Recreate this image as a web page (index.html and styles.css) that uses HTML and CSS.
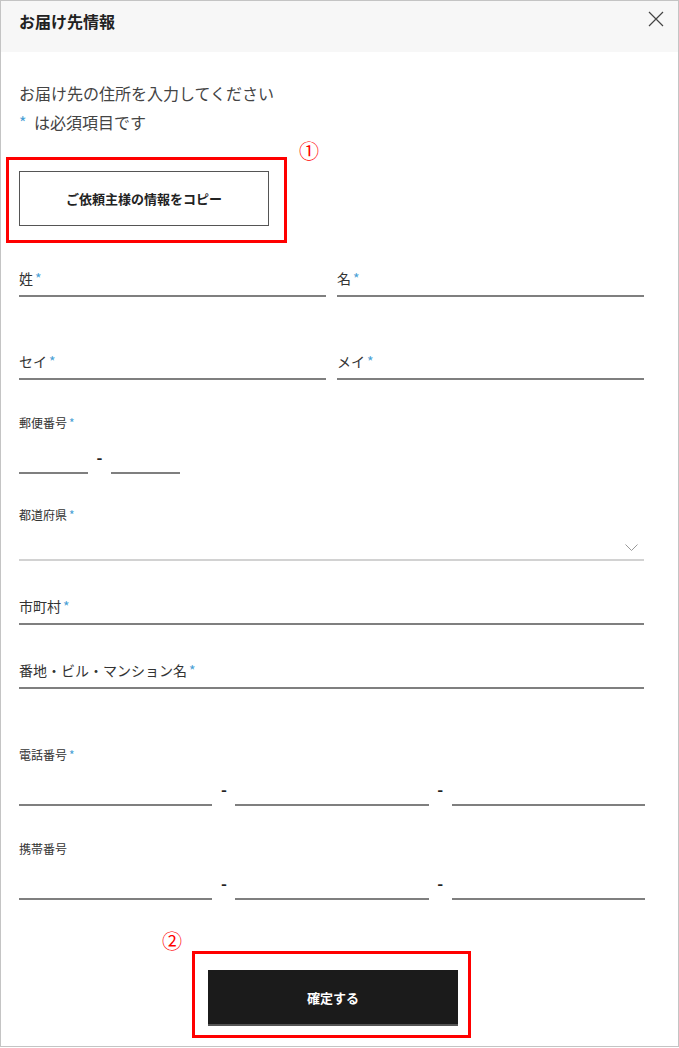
FILE: index.html
```html
<!DOCTYPE html>
<html lang="ja">
<head>
<meta charset="utf-8">
<title>お届け先情報</title>
<link rel="stylesheet" href="styles.css">
</head>
<body>
<div class="modal">
  <div class="modal-header">
    <h1 class="modal-title">お届け先情報</h1>
    <button class="close-btn" aria-label="閉じる">
      <svg width="16" height="16" viewBox="0 0 16 16"><path d="M1 1 L15 15 M15 1 L1 15" stroke="#444" stroke-width="1.2" fill="none"/></svg>
    </button>
  </div>
  <div class="modal-body">
    <p class="intro">お届け先の住所を入力してください</p>
    <p class="intro"><span class="req">*</span> は必須項目です</p>

    <div class="mark-wrap copy-mark">
      <span class="num num-1">①</span>
      <div class="copy-box">
        <button class="copy-btn">ご依頼主様の情報をコピー</button>
      </div>
    </div>

    <div class="row-2 row-name">
      <div class="field"><span class="label">姓<span class="req">*</span></span></div>
      <div class="field"><span class="label">名<span class="req">*</span></span></div>
    </div>

    <div class="row-2 row-kana">
      <div class="field"><span class="label">セイ<span class="req">*</span></span></div>
      <div class="field"><span class="label">メイ<span class="req">*</span></span></div>
    </div>

    <div class="group group-zip">
      <div class="small-label">郵便番号<span class="req">*</span></div>
      <div class="split zip">
        <div class="seg"></div><span class="dash">-</span><div class="seg"></div>
      </div>
    </div>

    <div class="group group-pref">
      <div class="small-label">都道府県<span class="req">*</span></div>
      <div class="select">
        <svg class="chev" width="13" height="7" viewBox="0 0 13 7"><path d="M0.5 0.5 L6.5 6.5 L12.5 0.5" stroke="#999" stroke-width="1" fill="none"/></svg>
      </div>
    </div>

    <div class="field full f-city"><span class="label">市町村<span class="req">*</span></span></div>
    <div class="field full f-addr"><span class="label">番地・ビル・マンション名<span class="req">*</span></span></div>

    <div class="group group-tel">
      <div class="small-label">電話番号<span class="req">*</span></div>
      <div class="split tel">
        <div class="seg"></div><span class="dash">-</span><div class="seg"></div><span class="dash">-</span><div class="seg"></div>
      </div>
    </div>

    <div class="group group-mobile">
      <div class="small-label">携帯番号</div>
      <div class="split tel">
        <div class="seg"></div><span class="dash">-</span><div class="seg"></div><span class="dash">-</span><div class="seg"></div>
      </div>
    </div>

    <div class="mark-wrap submit-mark">
      <span class="num num-2">②</span>
      <div class="submit-box">
        <button class="submit-btn">確定する</button>
      </div>
    </div>
  </div>
</div>
</body>
</html>
```

FILE: styles.css
```css
* { box-sizing: border-box; }
html, body { margin: 0; padding: 0; background: #fff; }
body {
  font-family: "Noto Sans CJK JP", "Noto Sans", "DejaVu Sans", sans-serif;
  color: #333;
}
.modal {
  width: 679px;
  height: 1047px;
  border: 1px solid #c4c4c4;
  background: #fff;
}
.modal-header {
  height: 51px;
  background: #f7f7f7;
  display: flex;
  align-items: flex-start;
  justify-content: space-between;
  padding: 0 14px 0 18px;
}
.modal-title {
  margin: 8px 0 0;
  font-size: 16px;
  font-weight: bold;
  line-height: 24px;
  color: #222;
}
.close-btn {
  margin-top: 10px;
  padding: 0;
  border: 0;
  background: none;
  width: 16px;
  height: 16px;
  display: block;
}
.close-btn svg { display: block; }
.modal-body { padding: 0 33px 0 18px; }
.intro {
  margin: 0;
  font-size: 16px;
  line-height: 29px;
  color: #444;
}
.intro:first-child { margin-top: 27px; }
.req { color: #4a9fd5; margin-left: 2px; }
.intro .req { margin-left: 0; margin-right: 4px; }

.mark-wrap { position: relative; }
.num {
  position: absolute;
  color: #f00;
  font-size: 20px;
  line-height: 20px;
}
.copy-mark { margin: 20px 0 0 -13px; width: 281px; }
.num-1 { left: 293px; top: -16px; }
.copy-box {
  border: 3px solid #f00;
  height: 86px;
  padding: 11px 0 0 10px;
}
.copy-btn {
  width: 250px;
  height: 55px;
  border: 1px solid #555;
  background: #fff;
  font-family: inherit;
  font-size: 13px;
  font-weight: bold;
  color: #222;
  display: block;
  padding: 0;
}

.row-2 {
  display: grid;
  grid-template-columns: 307px 307px;
  column-gap: 11px;
}
.row-name { margin-top: 25px; }
.row-kana { margin-top: 54px; }
.field {
  border-bottom: 2px solid #7f7f7f;
  padding-bottom: 7px;
}
.label {
  font-size: 14px;
  line-height: 20px;
  color: #333;
  display: block;
}
.full { width: 625px; }
.f-city { margin-top: 35px; }
.f-addr { margin-top: 35px; }

.small-label {
  font-size: 12px;
  line-height: 18px;
  color: #333;
}
.group-zip { margin-top: 34px; }
.group-pref { margin-top: 32px; }
.group-tel { margin-top: 57px; }
.group-mobile { margin-top: 34px; }

.split {
  display: flex;
  align-items: flex-end;
  margin-top: 10px;
}
.seg {
  height: 32px;
  border-bottom: 2px solid #7f7f7f;
}
.zip .seg { width: 69px; }
.tel .seg { width: 194px; }
.dash {
  width: 23px;
  text-align: center;
  font-size: 16px;
  font-weight: bold;
  line-height: 16px;
  color: #222;
  align-self: center;
  margin-top: -2px;
}
.select {
  width: 625px;
  height: 37px;
  border-bottom: 2px solid #d2d2d2;
  position: relative;
}
.chev { position: absolute; right: 6px; top: 20px; }

.submit-mark { margin: 51px 0 0 173px; width: 279px; }
.num-2 { left: -30px; top: -20px; }
.submit-box {
  border: 3px solid #f00;
  height: 87px;
  padding: 16px 0 0 13px;
}
.submit-btn {
  width: 250px;
  height: 56px;
  border: 0;
  border-bottom: 2px solid #555;
  background: #1b1b1b;
  color: #fff;
  font-family: inherit;
  font-size: 13px;
  font-weight: bold;
  display: block;
  padding: 0;
}
```
